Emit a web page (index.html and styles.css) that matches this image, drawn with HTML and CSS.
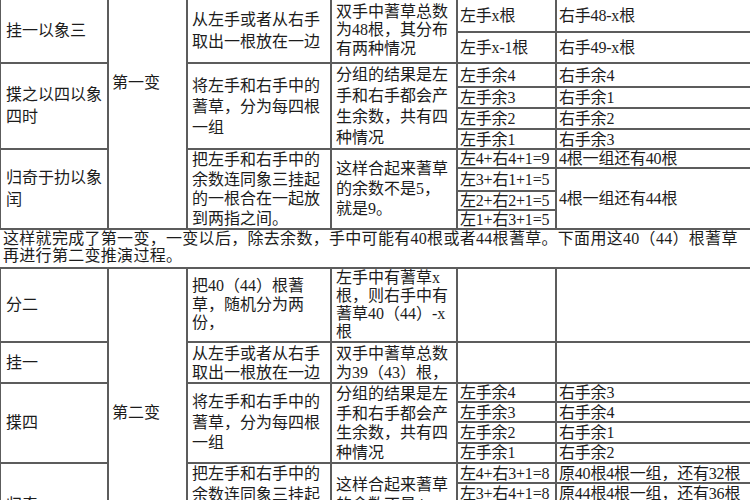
FILE: index.html
```html
<!DOCTYPE html>
<html lang="zh-CN">
<head>
<meta charset="utf-8">
<title>大衍筮法</title>
<link rel="stylesheet" href="styles.css">
</head>
<body>
<table class="grid first">
  <colgroup>
    <col class="w1"><col class="w2"><col class="w3"><col class="w4"><col class="w5"><col class="w6">
  </colgroup>
  <tr class="h62">
    <td class="lab">分而为二以象两</td>
    <td class="bian" rowspan="11">第一变</td>
    <td>把49根蓍草，随机<br>分为两份，</td>
    <td>左手中有蓍草x<br>根，则右手中有<br>49-x根</td>
    <td></td><td></td>
  </tr>
  <tr class="h34">
    <td class="lab" rowspan="2">挂一以象三</td>
    <td class="txt lh22" rowspan="2">从左手或者从右手<br>取出一根放在一边</td>
    <td class="txt lh185" rowspan="2">双手中蓍草总数<br>为48根，其分布<br>有两种情况</td>
    <td class="sm">左手x根</td>
    <td class="sm">右手48-x根</td>
  </tr>
  <tr class="h31">
    <td class="sm">左手x-1根</td>
    <td class="sm">右手49-x根</td>
  </tr>
  <tr class="h24">
    <td class="lab lh22" rowspan="4">揲之以四以象<br>四时</td>
    <td class="txt lh21" rowspan="4">将左手和右手中的<br>蓍草，分为每四根<br>一组</td>
    <td class="txt lh21" rowspan="4">分组的结果是左<br>手和右手都会产<br>生余数，共有四<br>种情况</td>
    <td class="sm">左手余4</td>
    <td class="sm">右手余4</td>
  </tr>
  <tr class="h21"><td class="sm">左手余3</td><td class="sm">右手余1</td></tr>
  <tr class="h21"><td class="sm">左手余2</td><td class="sm">右手余2</td></tr>
  <tr class="h20"><td class="sm">左手余1</td><td class="sm">右手余3</td></tr>
  <tr class="h19">
    <td class="lab lh22" rowspan="4">归奇于扐以象<br>闰</td>
    <td class="txt lh195" rowspan="4">把左手和右手中的<br>余数连同象三挂起<br>的一根合在一起放<br>到两指之间。</td>
    <td class="txt" rowspan="4">这样合起来蓍草<br>的余数不是5，<br>就是9。</td>
    <td class="sm">左4+右4+1=9</td>
    <td class="sm">4根一组还有40根</td>
  </tr>
  <tr class="h19">
    <td class="sm">左3+右1+1=5</td>
    <td class="sm" rowspan="3">4根一组还有44根</td>
  </tr>
  <tr class="h19"><td class="sm">左2+右2+1=5</td></tr>
  <tr class="h18"><td class="sm">左1+右3+1=5</td></tr>
</table>

<p class="note">这样就完成了第一变，一变以后，除去余数，手中可能有40根或者44根蓍草。下面用这40（44）根蓍草<br>再进行第二变推演过程。</p>

<table class="grid second">
  <colgroup>
    <col class="w1"><col class="w2"><col class="w3"><col class="w4"><col class="w5"><col class="w6">
  </colgroup>
  <tr class="h74">
    <td class="lab">分二</td>
    <td class="bian" rowspan="11">第二变</td>
    <td class="txt lh185">把40（44）根蓍<br>草，随机分为两<br>份，</td>
    <td class="txt lh18">左手中有蓍草x<br>根，则右手中有<br>蓍草40（44）-x<br>根</td>
    <td></td><td></td>
  </tr>
  <tr class="h41">
    <td class="lab">挂一</td>
    <td class="txt lh19">从左手或者从右手<br>取出一根放在一边</td>
    <td class="txt lh19">双手中蓍草总数<br>为39（43）根，</td>
    <td></td><td></td>
  </tr>
  <tr class="h18">
    <td class="lab" rowspan="4">揲四</td>
    <td class="txt lh205" rowspan="4">将左手和右手中的<br>蓍草，分为每四根<br>一组</td>
    <td class="txt lh195" rowspan="4">分组的结果是左<br>手和右手都会产<br>生余数，共有四<br>种情况</td>
    <td class="sm">左手余4</td>
    <td class="sm">右手余3</td>
  </tr>
  <tr class="h20"><td class="sm">左手余3</td><td class="sm">右手余4</td></tr>
  <tr class="h20"><td class="sm">左手余2</td><td class="sm">右手余1</td></tr>
  <tr class="h20"><td class="sm">左手余1</td><td class="sm">右手余2</td></tr>
  <tr class="h20">
    <td class="lab" rowspan="4">归奇</td>
    <td class="txt lh205" rowspan="4">把左手和右手中的<br>余数连同象三挂起<br>的一根合在一起放<br>到两指之间。</td>
    <td class="txt" rowspan="4">这样合起来蓍草<br>的余数不是4，<br>就是8。</td>
    <td class="sm">左4+右3+1=8</td>
    <td class="sm">原40根4根一组，还有32根</td>
  </tr>
  <tr class="h20"><td class="sm">左3+右4+1=8</td><td class="sm">原44根4根一组，还有36根</td></tr>
  <tr class="h21"><td class="sm">左2+右1+1=4</td><td class="sm">原40根4根一组，还有36根</td></tr>
  <tr class="h21"><td class="sm">左1+右2+1=4</td><td class="sm">原44根4根一组，还有40根</td></tr>
  <tr class="h10"><td></td><td></td><td></td><td></td><td></td></tr>
</table>
</body>
</html>
```

FILE: styles.css
```css
html, body {
  margin: 0;
  padding: 0;
  background: #ffffff;
}

body {
  font-family: "Liberation Serif", "Noto Sans CJK SC", serif;
  font-size: 16px;
  color: #1c1c1c;
  overflow: hidden;
}

.grid {
  border-collapse: collapse;
  table-layout: fixed;
  width: 751px;
  margin-left: -1px;
}

.first {
  margin-top: -65px;
}

.grid td {
  border: 2px solid #5c5c5c;
  padding: 0 3px;
  line-height: 20px;
  vertical-align: middle;
  white-space: nowrap;
  overflow: hidden;
}

.w1 { width: 108px; }
.w2 { width: 79px; }
.w3 { width: 144px; }
.w4 { width: 126px; }
.w5 { width: 99px; }
.w6 { width: 195px; }

.grid td.lab {
  padding-left: 5px;
}

.grid td.bian {
  padding-left: 3px;
}

.grid td.txt {
  padding-left: 4px;
}

.grid td.sm {
  line-height: 17px;
  padding: 0 2px;
  letter-spacing: -0.2px;
}

.lh18 { line-height: 18px !important; }
.lh185 { line-height: 18.5px !important; }
.lh19 { line-height: 19px !important; }
.lh195 { line-height: 19.5px !important; }
.lh205 { line-height: 20.5px !important; }
.lh21 { line-height: 21px !important; }
.lh22 { line-height: 22px !important; }

.h62 { height: 62px; }
.h34 { height: 34px; }
.h31 { height: 31px; }
.h24 { height: 24px; }
.h21 { height: 21px; }
.h20 { height: 20px; }
.h19 { height: 19px; }
.h18 { height: 18px; }
.h10 { height: 10px; }
.h41 { height: 41px; }
.h74 { height: 74px; }

.note {
  margin: 0;
  padding: 0 0 0 3px;
  height: 37px;
  line-height: 17px;
  letter-spacing: 0.3px;
  white-space: nowrap;
}
```
